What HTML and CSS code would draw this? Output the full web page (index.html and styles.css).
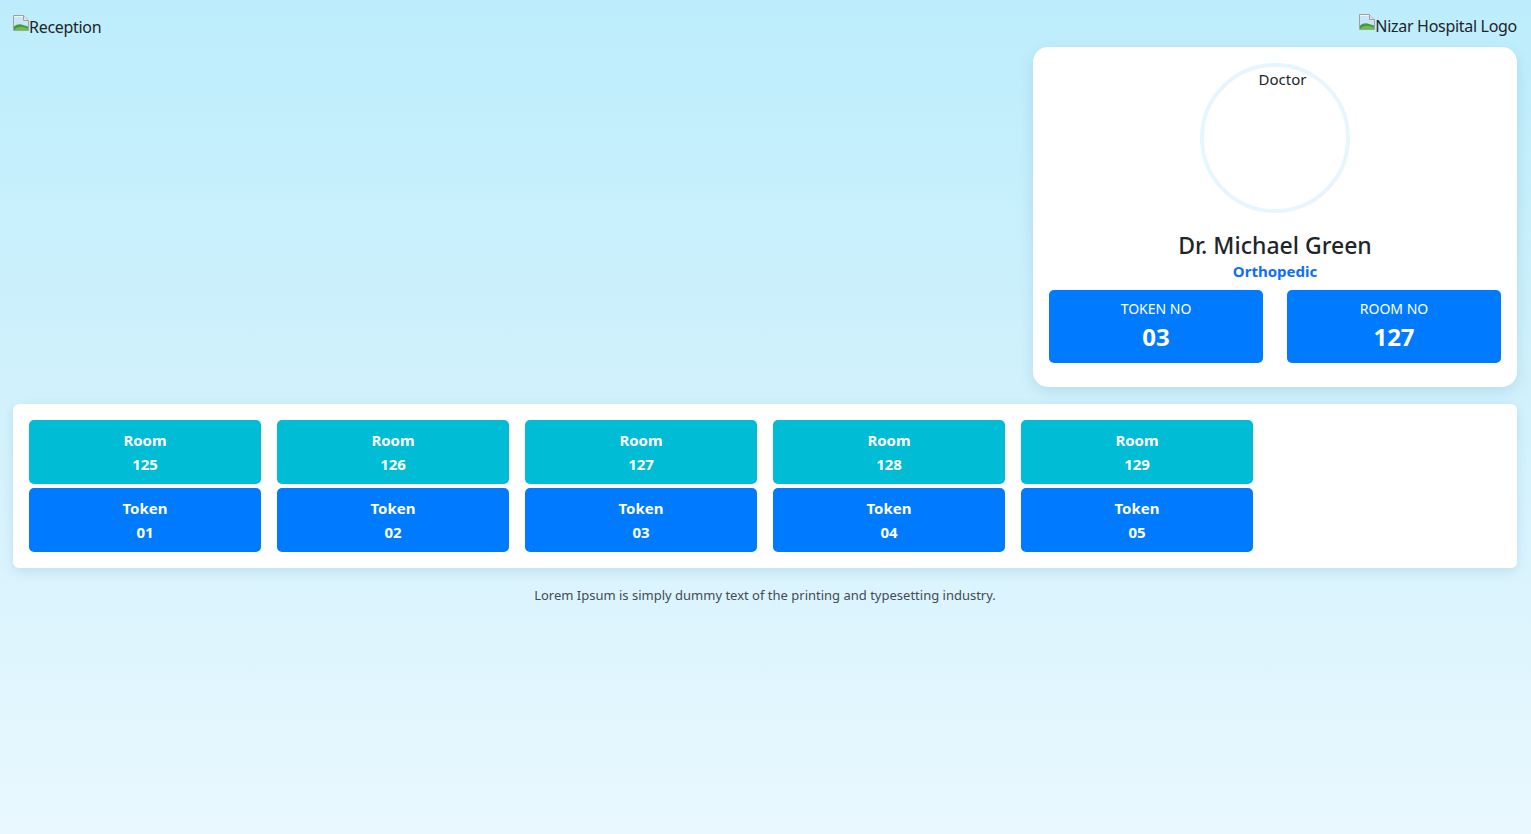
FILE: index.html
```html
<!DOCTYPE html>
<html lang="en">
<head>
<meta charset="utf-8">
<title>Reception Display</title>
<link rel="stylesheet" href="styles.css">
</head>
<body>
<div class="page">
  <div class="top">
    <div class="left-col">
      <span class="broken-img">
        <svg class="bi-icon" width="16" height="16" viewBox="0 0 16 16"><path d="M0.5 0.5h10l5 5v10h-15z" fill="#f4f4f4" stroke="#a0a0a0"/><path d="M10.5 0.5v5h5" fill="#e2e2e2" stroke="#a0a0a0"/><path d="M1 2h9v4h5v5H1z" fill="#c9e6f7"/><path d="M1 15V11.5C4 9 7 8.5 10 10l5 1.5V15z" fill="#3f9b3f"/><path d="M1 15c3-3 7-4 11-2.5l3 1V15z" fill="#6cbf4a"/></svg>Reception
      </span>
    </div>
    <div class="right-col">
      <div class="logo-row">
        <span class="broken-img">
          <svg class="bi-icon" width="16" height="16" viewBox="0 0 16 16"><path d="M0.5 0.5h10l5 5v10h-15z" fill="#f4f4f4" stroke="#a0a0a0"/><path d="M10.5 0.5v5h5" fill="#e2e2e2" stroke="#a0a0a0"/><path d="M1 2h9v4h5v5H1z" fill="#c9e6f7"/><path d="M1 15V11.5C4 9 7 8.5 10 10l5 1.5V15z" fill="#3f9b3f"/><path d="M1 15c3-3 7-4 11-2.5l3 1V15z" fill="#6cbf4a"/></svg>Nizar Hospital Logo
        </span>
      </div>
      <div class="doctor-card">
        <div class="avatar"><span class="avatar-alt">Doctor</span></div>
        <div class="doc-name">Dr. Michael Green</div>
        <div class="doc-spec">Orthopedic</div>
        <div class="current">
          <div class="cur-box">
            <div class="cur-label">TOKEN NO</div>
            <div class="cur-value">03</div>
          </div>
          <div class="cur-box">
            <div class="cur-label">ROOM NO</div>
            <div class="cur-value">127</div>
          </div>
        </div>
      </div>
    </div>
  </div>

  <div class="queue">
    <div class="q-item">
      <div class="q-room">Room<br>125</div>
      <div class="q-token">Token<br>01</div>
    </div>
    <div class="q-item">
      <div class="q-room">Room<br>126</div>
      <div class="q-token">Token<br>02</div>
    </div>
    <div class="q-item">
      <div class="q-room">Room<br>127</div>
      <div class="q-token">Token<br>03</div>
    </div>
    <div class="q-item">
      <div class="q-room">Room<br>128</div>
      <div class="q-token">Token<br>04</div>
    </div>
    <div class="q-item">
      <div class="q-room">Room<br>129</div>
      <div class="q-token">Token<br>05</div>
    </div>
  </div>

  <p class="footer">Lorem Ipsum is simply dummy text of the printing and typesetting industry.</p>
</div>
</body>
</html>
```

FILE: styles.css
```css
* { box-sizing: border-box; }
html, body { height: 100%; }
body {
  margin: 0;
  font-family: "Noto Sans", "Open Sans", sans-serif;
  color: #212529;
  background: linear-gradient(180deg, #bdedfc 0%, #d6f3fd 60%, #e9f8fe 100%);
  min-height: 834px;
}
.page {
  padding: 14px 14px 0 13px;
}
.top {
  display: flex;
  justify-content: space-between;
  align-items: flex-start;
}
.broken-img {
  display: inline-flex;
  align-items: flex-start;
  font-size: 16px;
  line-height: 24px;
  letter-spacing: -0.3px;
  color: #212529;
}
.bi-icon { display: block; flex: none; }
.right-col {
  width: 484px;
  display: flex;
  flex-direction: column;
}
.logo-row {
  display: flex;
  justify-content: flex-end;
}
.doctor-card {
  margin-top: 9px;
  background: #fff;
  border-radius: 15px;
  box-shadow: 0 5px 15px rgba(0, 80, 120, 0.12);
  padding: 16px 16px 24px;
  display: flex;
  flex-direction: column;
  align-items: center;
}
.avatar {
  width: 150px;
  height: 150px;
  border: 4px solid #e6f6ff;
  border-radius: 50%;
  display: flex;
  justify-content: center;
  margin-left: -1px;
}
.avatar-alt {
  font-size: 15px;
  line-height: 20px;
  margin-top: 2px;
  margin-left: 16px;
  color: #212529;
}
.doc-name {
  margin-top: 17px;
  font-size: 23px;
  font-weight: 500;
  line-height: 30px;
  color: #212529;
}
.doc-spec {
  font-size: 15px;
  font-weight: 700;
  color: #0d6efd;
  line-height: 22px;
}
.current {
  margin-top: 8px;
  width: 100%;
  display: flex;
  gap: 24px;
}
.cur-box {
  flex: 1;
  background: #007bff;
  color: #fff;
  border-radius: 5px;
  text-align: center;
  padding: 9px 0 8px;
}
.cur-label {
  font-size: 14px;
  line-height: 20px;
}
.cur-value {
  font-size: 24px;
  font-weight: 700;
  line-height: 36px;
}
.queue {
  margin-top: 17px;
  background: #fff;
  border-radius: 6px;
  box-shadow: 0 4px 12px rgba(0, 80, 120, 0.12);
  padding: 16px;
  display: flex;
  gap: 16px;
}
.q-item {
  width: 232px;
  display: flex;
  flex-direction: column;
  gap: 4px;
}
.q-room, .q-token {
  height: 64px;
  border-radius: 5px;
  color: #fff;
  font-weight: 700;
  font-size: 15px;
  line-height: 24px;
  text-align: center;
  padding: 8px 0;
}
.q-room { background: #00bcd4; }
.q-token { background: #007bff; }
.footer {
  margin: 17px 0 0;
  text-align: center;
  font-size: 13px;
  line-height: 20px;
  color: #444b55;
}
```
